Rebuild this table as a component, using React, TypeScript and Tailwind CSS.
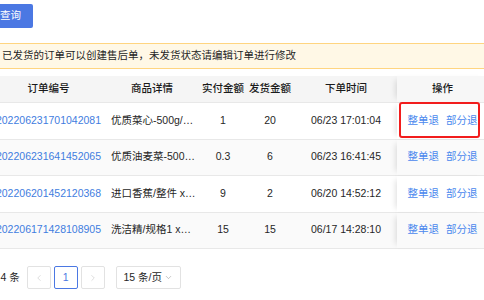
import { ChevronLeft, ChevronRight, ChevronDown } from 'lucide-react';

interface Order {
  no: string;
  goods: string;
  paid: string;
  shipped: string;
  time: string;
}

const orders: Order[] = [
  { no: '202206231701042081', goods: '优质菜心-500g/份 x1', paid: '1', shipped: '20', time: '06/23 17:01:04' },
  { no: '202206231641452065', goods: '优质油麦菜-500g/份 x1', paid: '0.3', shipped: '6', time: '06/23 16:41:45' },
  { no: '202206201452120368', goods: '进口香蕉/整件 x10', paid: '9', shipped: '2', time: '06/20 14:52:12' },
  { no: '202206171428108905', goods: '洗洁精/规格1 x100', paid: '15', shipped: '15', time: '06/17 14:28:10' },
];

const cols = 'grid grid-cols-[109px_98px_44px_50px_102px_91px]';

export default function App() {
  return (
    <div className="w-[484px] h-[300px] overflow-hidden bg-white text-[10.5px] text-[#262626] font-['Liberation_Sans','Noto_Sans_CJK_SC',sans-serif]">
      <div className="pt-[4px]">
        <button
          type="button"
          className="ml-[-12px] h-[24px] w-[45px] rounded-[2px] bg-[#4b78e3] text-white text-[10.5px]"
        >
          查询
        </button>
      </div>

      <div className="mt-[15px] ml-[-12px] w-[520px] h-[26px] flex items-center pl-[13px] border border-[#ffd580] bg-[#fff8e6]">
        已发货的订单可以创建售后单，未发货状态请编辑订单进行修改
      </div>

      <div className="mt-[7px] ml-[-6px] w-[494px]">
        <div className={`${cols} h-[27px] bg-[#f5f5f5] border-b border-[#e8e8e8] text-[#1a1a1a] font-medium`}>
          <div className="flex items-center justify-center">订单编号</div>
          <div className="flex items-center justify-center">商品详情</div>
          <div className="flex items-center justify-center whitespace-nowrap">实付金额</div>
          <div className="flex items-center justify-center whitespace-nowrap">发货金额</div>
          <div className="flex items-center justify-center">下单时间</div>
          <div className="flex items-center justify-center bg-[#f7f7f7] shadow-[-5px_0_6px_-4px_rgba(0,0,0,0.14)]">操作</div>
        </div>

        {orders.map((o, i) => {
          const bg = i % 2 === 1 ? 'bg-[#fafafa]' : 'bg-white';
          return (
            <div key={o.no} className={`${cols} h-[36.5px] border-b border-[#e8e8e8] ${bg}`}>
              <div className="flex items-center justify-center px-[2px] text-[#3f7de0] whitespace-nowrap">{o.no}</div>
              <div className="flex items-center pl-[8px] pr-[5px] min-w-0">
                <span className="truncate">{o.goods}</span>
              </div>
              <div className="flex items-center justify-center">{o.paid}</div>
              <div className="flex items-center justify-center">{o.shipped}</div>
              <div className="flex items-center justify-center whitespace-nowrap">{o.time}</div>
              <div className={`relative flex items-center justify-center gap-[7px] ${bg} shadow-[-5px_0_6px_-4px_rgba(0,0,0,0.14)] text-[#4a88ee]`}>
                <span>整单退</span>
                <span>部分退</span>
                {i === 0 && (
                  <div className="absolute left-[2px] right-[8px] top-[-1px] bottom-[1px] border-2 border-[#f21d1d] rounded-[3px]" />
                )}
              </div>
            </div>
          );
        })}
      </div>

      <div className="mt-[17px] ml-[-13px] flex items-center">
        <span className="whitespace-nowrap">共 4 条</span>
        <div className="ml-[7px] w-[24px] h-[23px] flex items-center justify-center border border-[#e2e2e2] rounded-[2px] text-[#c8c8c8]">
          <ChevronLeft size={10} strokeWidth={1.5} />
        </div>
        <div className="ml-[3px] w-[24px] h-[23px] flex items-center justify-center border border-[#4b78e3] rounded-[2px] text-[#4b78e3]">
          1
        </div>
        <div className="ml-[3px] w-[24px] h-[23px] flex items-center justify-center border border-[#e2e2e2] rounded-[2px] text-[#c8c8c8]">
          <ChevronRight size={10} strokeWidth={1.5} />
        </div>
        <div className="ml-[11px] w-[65px] h-[23px] flex items-center justify-center gap-[2px] border border-[#e2e2e2] rounded-[2px]">
          <span>15 条/页</span>
          <ChevronDown size={9} strokeWidth={1.5} className="text-[#999]" />
        </div>
      </div>
    </div>
  );
}
